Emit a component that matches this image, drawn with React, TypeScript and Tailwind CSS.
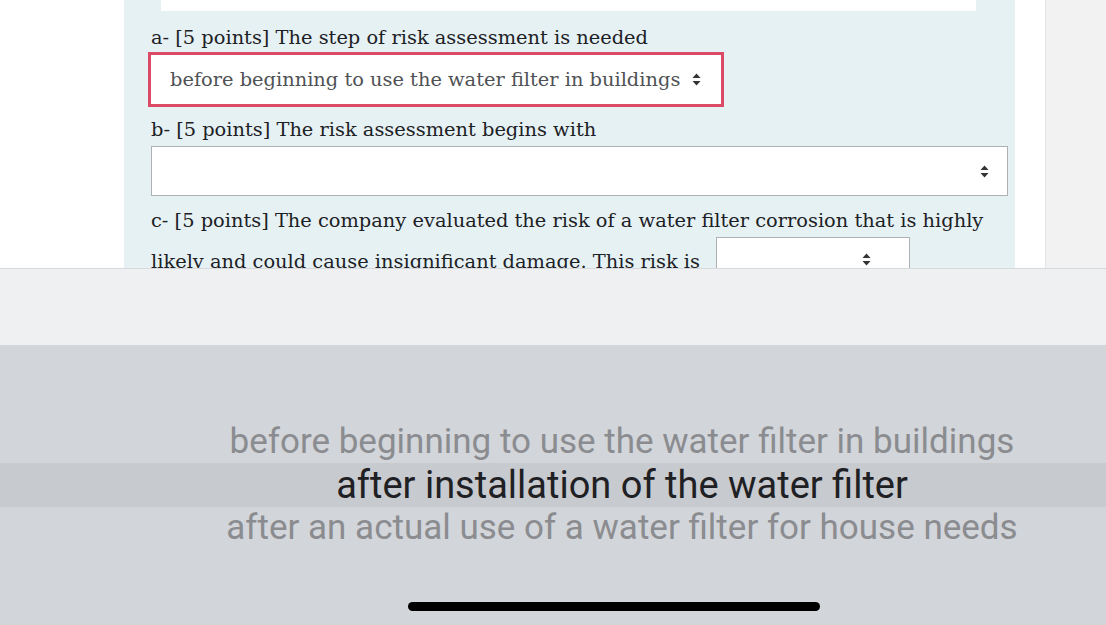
import React from "react";

const Arrows = ({ className = "" }: { className?: string }) => (
  <svg width="9" height="13" viewBox="0 0 9 13" className={className}>
    <path d="M4.5 0.5 L8.5 5 H0.5 Z" fill="#333" />
    <path d="M4.5 12.5 L8.5 8 H0.5 Z" fill="#333" />
  </svg>
);

const slab = { fontFamily: '"DejaVu Serif", "Liberation Serif", serif' };

export default function App() {
  return (
    <div className="w-[1106px] h-[625px] overflow-hidden flex flex-col bg-white">
      <div className="h-[268px] flex overflow-hidden shrink-0">
        <div className="w-[124px] bg-white" />
        <div
          className="w-[891px] bg-[#e6f1f4] pl-[27px] text-[#1d2125] text-[19.4px]"
          style={slab}
        >
          <div className="h-[11px] ml-[10px] w-[815px] bg-white" />
          <div className="mt-[15px] h-[24px] leading-[24px] whitespace-nowrap">
            a- [5 points] The step of risk assessment is needed
          </div>
          <div className="mt-[2px] ml-[-3px] w-[576px] h-[55px] border-[3px] border-[#dc4b66] bg-white flex items-center pl-[19px] pr-[20px] justify-between">
            <span className="text-[#4f5255] whitespace-nowrap">
              before beginning to use the water filter in buildings
            </span>
            <Arrows />
          </div>
          <div className="mt-[11px] h-[24px] leading-[24px] whitespace-nowrap">
            b- [5 points] The risk assessment begins with
          </div>
          <div className="mt-[4px] w-[857px] h-[50px] border border-[#aeb2b5] bg-white flex items-center justify-end pr-[18px]">
            <Arrows />
          </div>
          <div className="mt-[13px] h-[24px] leading-[24px] whitespace-nowrap">
            c- [5 points] The company evaluated the risk of a water filter corrosion that is highly
          </div>
          <div className="mt-[4px] flex items-start whitespace-nowrap">
            <span className="mt-[13px] leading-[24px]">
              likely and could cause insignificant damage. This risk is
            </span>
            <div className="ml-[16px] w-[194px] h-[45px] border border-[#aeb2b5] bg-white flex items-center justify-end pr-[38px]">
              <Arrows />
            </div>
          </div>
        </div>
        <div className="w-[30px] bg-white" />
        <div className="flex-1 border-l border-[#e4e4e4] bg-[#f2f2f2]" />
      </div>
      <div className="h-[77px] shrink-0 border-t border-[#d8d9dc] bg-[#eff0f2]" />
      <div
        className="flex-1 bg-[#d2d5da] flex flex-col"
        style={{ fontFamily: 'Roboto, "Noto Sans", sans-serif' }}
      >
        <div className="pt-[76px] pl-[138px] flex flex-col">
          <div className="h-[42px] flex items-center justify-center text-[35px] text-[#8b8c90] whitespace-nowrap">
            before beginning to use the water filter in buildings
          </div>
          <div className="h-[44px] -ml-[138px] pl-[138px] bg-[#c7cace] flex items-center justify-center text-[38px] text-[#1f2023] whitespace-nowrap">
            after installation of the water filter
          </div>
          <div className="h-[42px] flex items-center justify-center text-[35px] text-[#8b8c90] whitespace-nowrap">
            after an actual use of a water filter for house needs
          </div>
        </div>
        <div className="mt-[53px] ml-[408px] w-[412px] h-[9px] rounded-full bg-black" />
      </div>
    </div>
  );
}
